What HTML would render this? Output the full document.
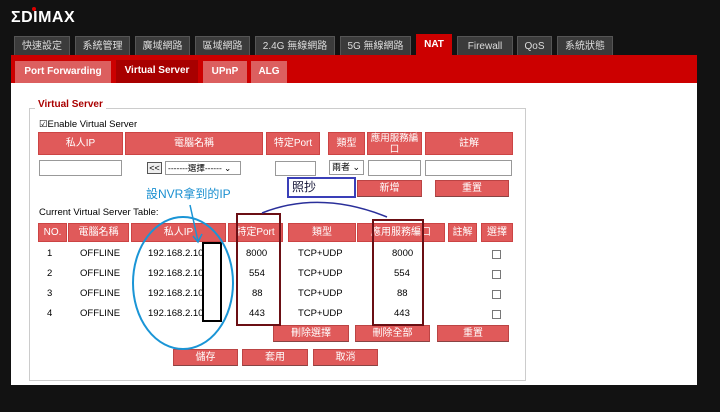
<!DOCTYPE html><html><head><meta charset="utf-8"><style>
body{margin:0;width:720px;height:412px;background:#121212;position:relative;overflow:hidden;font-family:"Liberation Sans","Noto Sans CJK TC",sans-serif;}
.a{position:absolute;box-sizing:border-box;}
.t{background:#3b3b3b;color:#ddd;font-size:10px;text-align:center;line-height:19px;border:1px solid #555;border-bottom:none;}
.s{color:#fff;font-size:10px;font-weight:bold;text-align:center;line-height:22px;}
.h{background:#e05a5a;color:#fff;font-size:10px;text-align:center;border:1px solid #c44;display:flex;align-items:center;justify-content:center;line-height:11px;}
.in{background:#fff;border:1px solid #999;}
.b{background:#e05a5a;color:#fff;font-size:10px;text-align:center;line-height:15px;border:1px solid #b44;border-bottom-color:#844;}
.c{font-size:9.5px;color:#000;text-align:center;}
.cb{width:9px;height:9px;border:1px solid #777;background:#fff;}
</style></head><body>
<div class="a" style="left:11px;top:9px;color:#fff;font-weight:900;font-size:16px;letter-spacing:0.5px;font-family:'Liberation Sans',sans-serif;">ΣDIMAX</div>
<div class="a" style="left:32px;top:7px;width:4px;height:4px;border-radius:50%;background:#d00"></div>
<div class="a t" style="left:14px;top:36px;width:56px;height:20px">快速設定</div>
<div class="a t" style="left:75px;top:36px;width:55px;height:20px">系統管理</div>
<div class="a t" style="left:135px;top:36px;width:55px;height:20px">廣域網路</div>
<div class="a t" style="left:195px;top:36px;width:55px;height:20px">區域網路</div>
<div class="a t" style="left:255px;top:36px;width:80px;height:20px">2.4G 無線網路</div>
<div class="a t" style="left:340px;top:36px;width:71px;height:20px">5G 無線網路</div>
<div class="a t" style="left:416px;top:34px;width:36px;height:22px;background:#cc0000;border-color:#c00;color:#fff;font-weight:bold">NAT</div>
<div class="a t" style="left:457px;top:36px;width:56px;height:20px">Firewall</div>
<div class="a t" style="left:517px;top:36px;width:35px;height:20px">QoS</div>
<div class="a t" style="left:557px;top:36px;width:56px;height:20px">系統狀態</div>
<div class="a" style="left:11px;top:55px;width:686px;height:28px;background:#cc0000"></div>
<div class="a s" style="left:15px;top:61px;width:96px;height:22px;background:#dc5f5f">Port Forwarding</div>
<div class="a s" style="left:116px;top:60px;width:82px;height:23px;background:#a80000">Virtual Server</div>
<div class="a s" style="left:203px;top:61px;width:44px;height:22px;background:#dc5f5f">UPnP</div>
<div class="a s" style="left:251px;top:61px;width:36px;height:22px;background:#dc5f5f">ALG</div>
<div class="a" style="left:11px;top:83px;width:686px;height:302px;background:#fff"></div>
<div class="a" style="left:29px;top:108px;width:497px;height:273px;border:1px solid #ccc"></div>
<div class="a" style="left:35px;top:99px;background:#fff;padding:0 3px;color:#a00;font-weight:bold;font-size:10px">Virtual Server</div>
<div class="a" style="left:39px;top:119px;font-size:9.5px;color:#000">☑Enable Virtual Server</div>
<div class="a h" style="left:38px;top:132px;width:85px;height:23px">私人IP</div>
<div class="a h" style="left:125px;top:132px;width:138px;height:23px">電腦名稱</div>
<div class="a h" style="left:266px;top:132px;width:54px;height:23px">特定Port</div>
<div class="a h" style="left:328px;top:132px;width:37px;height:23px">類型</div>
<div class="a h" style="left:367px;top:132px;width:55px;height:23px;font-size:9.5px">應用服務編<br>口</div>
<div class="a h" style="left:425px;top:132px;width:88px;height:23px">註解</div>
<div class="a in" style="left:39px;top:160px;width:83px;height:16px"></div>
<div class="a" style="left:147px;top:162px;width:15px;height:12px;border:1px solid #555;background:#eee;font-size:9px;line-height:10px;text-align:center">&lt;&lt;</div>
<div class="a in" style="left:165px;top:161px;width:76px;height:14px;font-size:8.5px;line-height:12px;padding-left:2px">-------選擇------ ⌄</div>
<div class="a in" style="left:275px;top:161px;width:41px;height:15px"></div>
<div class="a in" style="left:329px;top:160px;width:35px;height:15px;font-size:9px;line-height:13px;padding-left:2px">兩者 ⌄</div>
<div class="a in" style="left:368px;top:160px;width:53px;height:16px"></div>
<div class="a in" style="left:425px;top:160px;width:87px;height:16px"></div>
<div class="a b" style="left:357px;top:180px;width:65px;height:17px">新增</div>
<div class="a b" style="left:435px;top:180px;width:74px;height:17px">重置</div>
<div class="a" style="left:287px;top:177px;width:69px;height:21px;border:2px solid #3a3fb8;font-size:12px;color:#113;padding-left:3px;line-height:17px">照抄</div>
<div class="a" style="left:146px;top:185px;font-size:12px;color:#1a8fd0">設NVR拿到的IP</div>
<div class="a" style="left:39px;top:207px;font-size:9.5px;color:#000">Current Virtual Server Table:</div>
<div class="a h" style="left:38px;top:223px;width:29px;height:19px">NO.</div>
<div class="a h" style="left:68px;top:223px;width:61px;height:19px">電腦名稱</div>
<div class="a h" style="left:131px;top:223px;width:95px;height:19px">私人IP</div>
<div class="a h" style="left:228px;top:223px;width:55px;height:19px">特定Port</div>
<div class="a h" style="left:288px;top:223px;width:68px;height:19px">類型</div>
<div class="a h" style="left:357px;top:223px;width:88px;height:19px">應用服務編口</div>
<div class="a h" style="left:448px;top:223px;width:29px;height:19px">註解</div>
<div class="a h" style="left:481px;top:223px;width:32px;height:19px">選擇</div>
<div class="a" style="left:0;top:248px;width:720px">
<div class="a c" style="left:47px;top:0">1</div><div class="a c" style="left:80px;top:0">OFFLINE</div><div class="a c" style="left:148px;top:0">192.168.2.10</div><div class="a c" style="left:246px;top:0">8000</div><div class="a c" style="left:298px;top:0">TCP+UDP</div><div class="a c" style="left:392px;top:0">8000</div><div class="a cb" style="left:492px;top:2px"></div>
<div class="a c" style="left:47px;top:20px">2</div><div class="a c" style="left:80px;top:20px">OFFLINE</div><div class="a c" style="left:148px;top:20px">192.168.2.10</div><div class="a c" style="left:249px;top:20px">554</div><div class="a c" style="left:298px;top:20px">TCP+UDP</div><div class="a c" style="left:394px;top:20px">554</div><div class="a cb" style="left:492px;top:22px"></div>
<div class="a c" style="left:47px;top:40px">3</div><div class="a c" style="left:80px;top:40px">OFFLINE</div><div class="a c" style="left:148px;top:40px">192.168.2.10</div><div class="a c" style="left:252px;top:40px">88</div><div class="a c" style="left:397px;top:40px">88</div><div class="a c" style="left:298px;top:40px">TCP+UDP</div><div class="a cb" style="left:492px;top:42px"></div>
<div class="a c" style="left:47px;top:60px">4</div><div class="a c" style="left:80px;top:60px">OFFLINE</div><div class="a c" style="left:148px;top:60px">192.168.2.10</div><div class="a c" style="left:249px;top:60px">443</div><div class="a c" style="left:298px;top:60px">TCP+UDP</div><div class="a c" style="left:394px;top:60px">443</div><div class="a cb" style="left:492px;top:62px"></div>
</div>
<div class="a b" style="left:273px;top:325px;width:76px;height:17px">刪除選擇</div>
<div class="a b" style="left:355px;top:325px;width:75px;height:17px">刪除全部</div>
<div class="a b" style="left:437px;top:325px;width:72px;height:17px">重置</div>
<div class="a b" style="left:173px;top:349px;width:65px;height:17px">儲存</div>
<div class="a b" style="left:242px;top:349px;width:66px;height:17px">套用</div>
<div class="a b" style="left:313px;top:349px;width:65px;height:17px">取消</div>
<svg class="a" style="left:0;top:0" width="720" height="412">
<rect x="203" y="243" width="18" height="78" fill="#fff" stroke="#000" stroke-width="2"/>
<rect x="237" y="214" width="43" height="111" fill="none" stroke="#6b0f14" stroke-width="2"/>
<rect x="373" y="220" width="50" height="105" fill="none" stroke="#6b0f14" stroke-width="2"/>
<ellipse cx="183" cy="283" rx="50" ry="66" fill="none" stroke="#1a95d6" stroke-width="2"/>
<path d="M262 213 Q320 190 387 217" fill="none" stroke="#2a2f9a" stroke-width="1.5"/>
<path d="M190 205 L198 241 M193 236 L198 242 L202 234" fill="none" stroke="#1a95d6" stroke-width="1.5"/>
</svg>
</body></html>
